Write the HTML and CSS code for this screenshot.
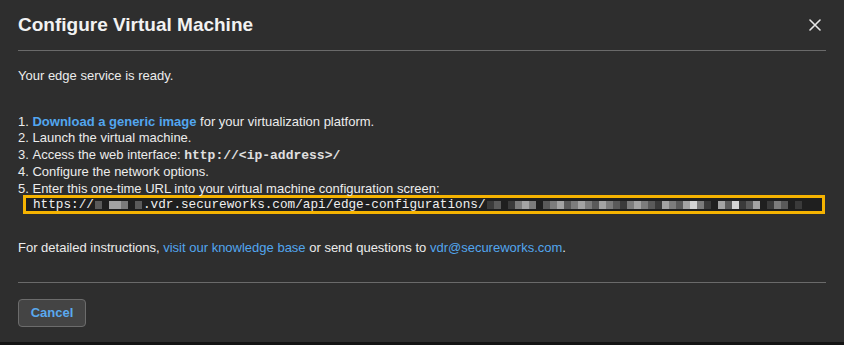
FILE: index.html
```html
<!DOCTYPE html>
<html lang="en">
<head>
    <meta charset="UTF-8">
    <title>Configure Virtual Machine</title>
    <link rel="stylesheet" href="styles.css">
</head>
<body>
    <div class="modal">
        <div class="modal-header">
            <h1>Configure Virtual Machine</h1>
            <button class="close" aria-label="Close">
                <svg width="12" height="12" viewBox="0 0 12 12"><path d="M1 1L11 11M11 1L1 11" stroke="#e6e6e6" stroke-width="1.6" stroke-linecap="round"/></svg>
            </button>
        </div>
        <div class="modal-body">
            <p class="ready">Your edge service is ready.</p>
            <ol class="steps">
                <li><a href="#">Download a generic image</a> for your virtualization platform.</li>
                <li>Launch the virtual machine.</li>
                <li>Access the web interface: <code>http://&lt;ip-address&gt;/</code></li>
                <li>Configure the network options.</li>
                <li>Enter this one-time URL into your virtual machine configuration screen:</li>
            </ol>
            <div class="url-box">
                <code>https://<span class="blur"><i class="g1"></i><i class="sp"></i><i class="g3 w2"></i><i class="g2"></i><i class="sp"></i><i class="g1"></i></span>.vdr.secureworks.com/api/edge-configurations/<span class="blur"><i class="g0"></i><i class="g1"></i><i class="sp"></i><i class="g0"></i><i class="g2"></i><i class="g3"></i><i class="g2"></i><i class="sp"></i><i class="g1"></i><i class="g2"></i><i class="g3"></i><i class="g1"></i><i class="g2"></i><i class="g3"></i><i class="g2"></i><i class="g1"></i><i class="g3"></i><i class="g2"></i><i class="g1"></i><i class="g0"></i><i class="g2"></i><i class="g3"></i><i class="g2"></i><i class="g1"></i><i class="g0"></i><i class="g3"></i><i class="g2"></i><i class="g1"></i><i class="g3"></i><i class="g4"></i><i class="g2"></i><i class="g0"></i><i class="sp"></i><i class="g3"></i><i class="g1"></i><i class="g4"></i><i class="g0"></i><i class="g1"></i><i class="g3"></i><i class="sp"></i><i class="g0"></i><i class="g2"></i><i class="g1"></i><i class="sp"></i><i class="g0"></i></span></code>
            </div>
            <p class="help">For detailed instructions, <a href="#">visit our knowledge base</a> or send questions to <a href="#">vdr@secureworks.com</a>.</p>
        </div>
        <div class="modal-footer">
            <button class="cancel">Cancel</button>
        </div>
    </div>
</body>
</html>
```

FILE: styles.css
```css
body {
    margin: 0;
    background-color: #141414;
    font-family: "Liberation Sans", Arial, sans-serif;
    color: #ececec;
}
.modal {
    background-color: #2e2e2e;
    height: 342px;
    box-sizing: border-box;
}
.modal-header {
    margin: 0 18px;
    height: 50px;
    border-bottom: 1px solid #6a6a6a;
    display: flex;
    align-items: center;
    justify-content: space-between;
}
.modal-header h1 {
    margin: 0;
    font-size: 19px;
    font-weight: bold;
    color: #f2f2f2;
}
.close {
    background: none;
    border: none;
    padding: 0;
    margin-right: 5px;
    display: flex;
    cursor: pointer;
}
.modal-body {
    padding: 0 18px;
    font-size: 13px;
    line-height: 16.5px;
}
.ready {
    margin: 17px 0 0;
}
.steps {
    margin: 29px 0 0;
    padding: 0;
    list-style-position: inside;
}
a {
    color: #52a6ef;
    text-decoration: none;
    font-weight: bold;
}
.help a {
    font-weight: normal;
}
code {
    font-family: "Liberation Mono", "Courier New", monospace;
    font-weight: bold;
    font-size: 13px;
    color: #e0e0e0;
}
.url-box {
    margin: -2px 0 0 5px;
    border: 3px solid #f5b301;
    background-color: #1f1f1f;
    height: 13px;
    padding: 0 7px;
    display: flex;
    align-items: center;
    width: 782px;
}
.url-box code {
    font-size: 12.7px;
    line-height: 13px;
    font-weight: normal;
    color: #f0f0f0;
    white-space: nowrap;
}
.blur {
    display: inline-flex;
    vertical-align: middle;
    margin: 0 1px;
}
.blur i {
    display: inline-block;
    width: 7px;
    height: 8px;
}
.blur .w2 { width: 12px; }
.blur .sp { width: 7px; background: transparent; }
.blur .g0 { background-color: #3a3a3a; }
.blur .g1 { background-color: #5a5a5a; }
.blur .g2 { background-color: #7c7c7c; }
.blur .g3 { background-color: #a3a3a3; }
.blur .g4 { background-color: #d4d4d4; }
.help {
    margin: 26px 0 0;
}
.modal-footer {
    margin: 25px 18px 0;
    border-top: 1px solid #6a6a6a;
    padding-top: 16px;
}
.cancel {
    background-color: #444;
    border: 1px solid #6c6c6c;
    border-radius: 4px;
    color: #5aa9ee;
    font-family: "Liberation Sans", Arial, sans-serif;
    font-weight: bold;
    font-size: 13px;
    width: 68px;
    height: 28px;
    padding: 0;
    cursor: pointer;
}
```
